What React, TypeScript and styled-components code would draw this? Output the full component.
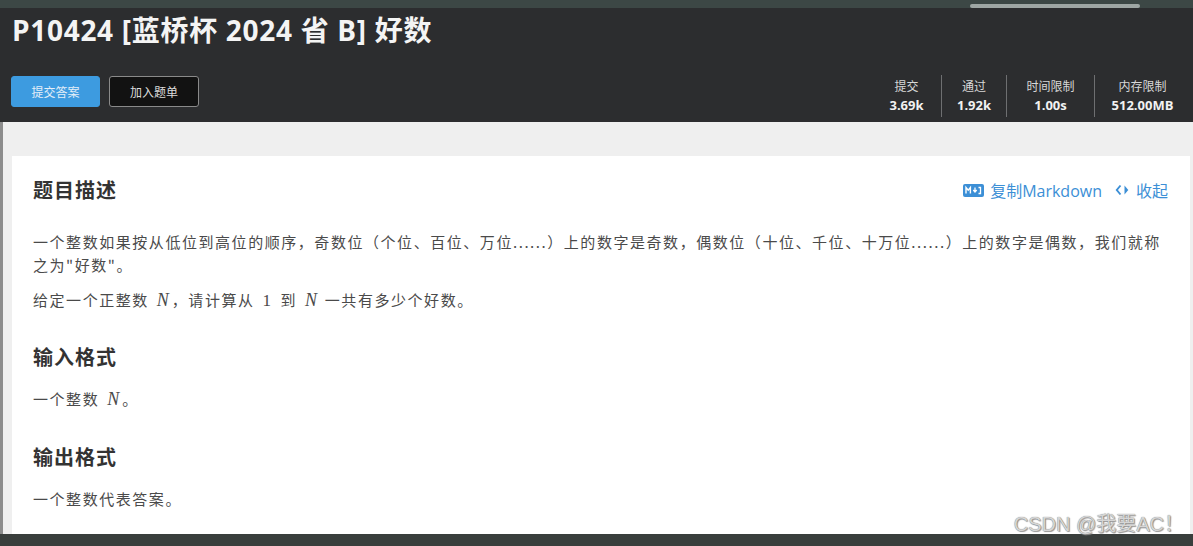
import * as React from 'react';
import styled, { createGlobalStyle } from 'styled-components';

const GlobalStyle = createGlobalStyle`
  html, body {
    margin: 0;
    padding: 0;
    background: #efefef;
  }
  body {
    font-family: 'Open Sans', 'Noto Sans CJK SC', sans-serif;
  }
`;

const Page = styled.div`
  position: relative;
  display: flex;
  flex-direction: column;
  width: 1193px;
  height: 546px;
  overflow: hidden;
`;

const TopStrip = styled.div`
  display: flex;
  justify-content: flex-end;
  align-items: flex-end;
  height: 8px;
  padding-right: 53px;
  background: #3c4745;
`;

const Pill = styled.div`
  width: 170px;
  height: 4px;
  border-radius: 2px;
  background: #9ea6a4;
`;

const Header = styled.header`
  height: 114px;
  padding: 4px 3px 0 12px;
  box-sizing: border-box;
  background: #2c2d2f;
  color: #fff;
`;

const Title = styled.h1`
  margin: 0;
  font-size: 28px;
  line-height: 36px;
  font-weight: 700;
  letter-spacing: 0.7px;
  color: #f4f4f4;
`;

const ActionRow = styled.div`
  display: flex;
  justify-content: space-between;
  align-items: flex-start;
  margin-top: 27px;
`;

const Buttons = styled.div`
  display: flex;
  gap: 9px;
  padding-top: 1px;
  margin-left: -1px;
`;

const Button = styled.button<{ $primary?: boolean }>`
  width: ${(p) => (p.$primary ? '89px' : '90px')};
  height: 31px;
  padding: 0;
  border-radius: 3px;
  border: 1px solid ${(p) => (p.$primary ? '#3d9be0' : '#8a8a8a')};
  background: ${(p) => (p.$primary ? '#3d9be0' : '#121212')};
  color: ${(p) => (p.$primary ? '#e4eef8' : '#dcdcdc')};
  font-family: 'Noto Sans CJK SC', sans-serif;
  font-size: 12px;
`;

const Stats = styled.div`
  display: flex;
  height: 42px;
`;

const Stat = styled.div<{ $w: number }>`
  display: flex;
  flex-direction: column;
  align-items: center;
  width: ${(p) => p.$w}px;
  padding-top: 2px;
  box-sizing: border-box;
  & + & {
    border-left: 1px solid #6e6f71;
  }
`;

const StatLabel = styled.span`
  font-family: 'Noto Sans CJK SC', sans-serif;
  font-size: 12px;
  line-height: 18px;
  color: #d8d8d8;
`;

const StatValue = styled.span`
  font-size: 13px;
  line-height: 20px;
  font-weight: 700;
  color: #f2f2f2;
`;

const Main = styled.main`
  flex: 1;
  display: flex;
  padding: 34px 3px 0 9px;
  border-left: 3px solid #8c8c8c;
  background: #efefef;
`;

const Card = styled.section`
  flex: 1;
  padding: 20px 22px 0 21px;
  background: #fff;
  font-family: 'Noto Sans CJK SC', sans-serif;
`;

const SectionHead = styled.div<{ $gap: number }>`
  display: flex;
  justify-content: space-between;
  align-items: center;
  margin-bottom: ${(p) => p.$gap}px;
`;

const Heading = styled.h2`
  margin: 0;
  font-size: 20px;
  line-height: 28px;
  font-weight: 700;
  letter-spacing: 1px;
  color: #333;
`;

const Links = styled.div`
  display: flex;
  align-items: center;
  gap: 13px;
  font-size: 16px;
  color: #3c8fd6;
`;

const Link = styled.span`
  display: flex;
  align-items: center;
  gap: 6px;
  font-family: 'Open Sans', 'Noto Sans CJK SC', sans-serif;
`;

const Para = styled.p<{ $after?: number }>`
  margin: 0 0 ${(p) => (p.$after ?? 12)}px;
  font-size: 15px;
  line-height: 23px;
  letter-spacing: 1.55px;
  color: #4a4a4a;
`;

const Math = styled.span`
  font-family: 'Liberation Serif', serif;
  font-style: italic;
  font-size: 18px;
  line-height: 1;
  letter-spacing: 0;
  margin: 0 3px;
`;

const Num = styled.span`
  font-family: 'Liberation Serif', serif;
  font-size: 17px;
  line-height: 1;
  margin: 0 3px;
`;

const BottomBar = styled.div`
  height: 12px;
  background: #393e3c;
`;

const Watermark = styled.div`
  position: absolute;
  right: 9px;
  bottom: 9px;
  font-family: 'Liberation Sans', 'Noto Sans CJK SC', sans-serif;
  font-size: 20px;
  color: #d6d6d6;
  text-shadow: 0 0 1px #6a6a6a, 1px 1px 1px #9a9a9a;
`;

function MdIcon() {
  return (
    <svg width="21" height="13" viewBox="0 0 21 13">
      <rect x="0" y="0" width="21" height="13" rx="2" fill="#3c8fd6" />
      <path d="M3 9.5V3.5l2.2 2.6 2.2-2.6v6" stroke="#fff" strokeWidth="1.4" fill="none" />
      <path d="M12 3.5v4M10.3 6l1.7 2 1.7-2M15.5 3.5h2v6h-2" stroke="#fff" strokeWidth="1.3" fill="none" />
    </svg>
  );
}

function FoldIcon() {
  return (
    <svg width="15" height="14" viewBox="0 0 15 14">
      <path d="M5.5 2.5L1.8 7l3.7 4.5" stroke="#3c8fd6" strokeWidth="1.9" fill="none" />
      <path d="M9.5 2.5L13.3 7l-3.8 4.5z" fill="#3c8fd6" />
    </svg>
  );
}

const stats = [
  { label: '提交', value: '3.69k', w: 69 },
  { label: '通过', value: '1.92k', w: 65 },
  { label: '时间限制', value: '1.00s', w: 88 },
  { label: '内存限制', value: '512.00MB', w: 96 },
];

export default function App() {
  return (
    <Page>
      <GlobalStyle />
      <TopStrip>
        <Pill />
      </TopStrip>
      <Header>
        <Title>P10424 [蓝桥杯 2024 省 B] 好数</Title>
        <ActionRow>
          <Buttons>
            <Button $primary>提交答案</Button>
            <Button>加入题单</Button>
          </Buttons>
          <Stats>
            {stats.map((s) => (
              <Stat key={s.label} $w={s.w}>
                <StatLabel>{s.label}</StatLabel>
                <StatValue>{s.value}</StatValue>
              </Stat>
            ))}
          </Stats>
        </ActionRow>
      </Header>
      <Main>
        <Card>
          <SectionHead $gap={26}>
            <Heading>题目描述</Heading>
            <Links>
              <Link>
                <MdIcon />
                复制Markdown
              </Link>
              <Link>
                <FoldIcon />
                收起
              </Link>
            </Links>
          </SectionHead>
          <Para>
            一个整数如果按从低位到高位的顺序，奇数位（个位、百位、万位......）上的数字是奇数，偶数位（十位、千位、十万位......）上的数字是偶数，我们就称之为"好数"。
          </Para>
          <Para $after={32}>
            给定一个正整数 <Math>N</Math>，请计算从 <Num>1</Num> 到 <Math>N</Math> 一共有多少个好数。
          </Para>
          <SectionHead $gap={16}>
            <Heading>输入格式</Heading>
          </SectionHead>
          <Para $after={33}>
            一个整数 <Math>N</Math>。
          </Para>
          <SectionHead $gap={16}>
            <Heading>输出格式</Heading>
          </SectionHead>
          <Para>一个整数代表答案。</Para>
        </Card>
      </Main>
      <BottomBar />
      <Watermark>CSDN @我要AC！</Watermark>
    </Page>
  );
}
